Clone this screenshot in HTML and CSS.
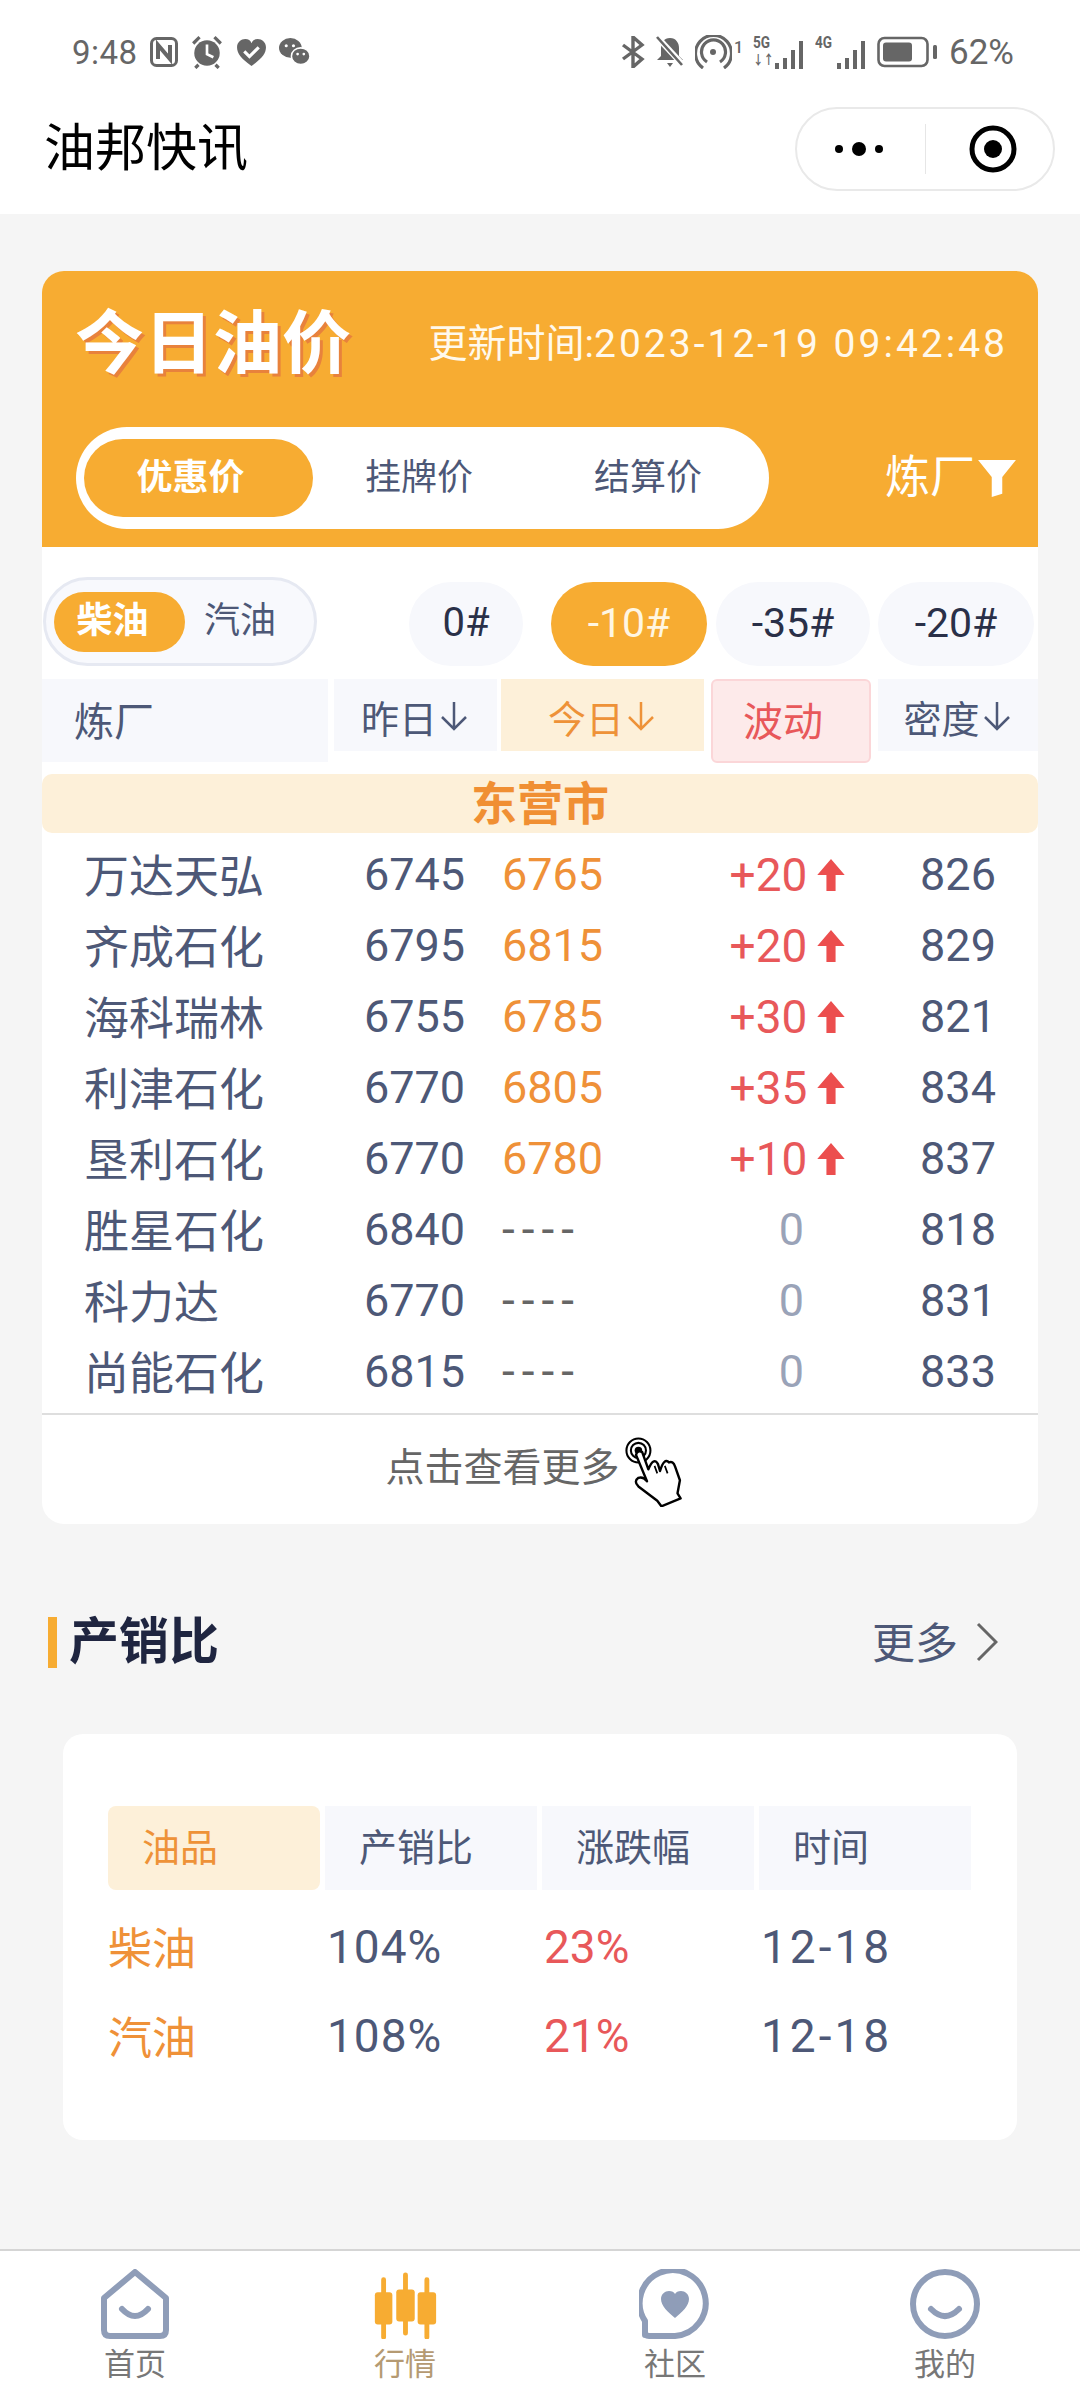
FILE: index.html
```html
<!DOCTYPE html>
<html lang="zh-CN">
<head>
<meta charset="utf-8">
<title>油邦快讯</title>
<link rel="stylesheet" href="styles.css">
</head>
<body>
<div class="app">
  <header class="top">
    <div class="status">
      <div class="status-group">
        <span class="clock">9:48</span>
        <svg class="si" width="28" height="30" viewBox="0 0 28 30"><rect x="1.5" y="1.5" width="25" height="27" rx="5" fill="none" stroke="#666" stroke-width="3"/><path d="M8 22V8l12 14V8" fill="none" stroke="#666" stroke-width="4"/></svg>
        <svg class="si" width="34" height="34" viewBox="0 0 32 32"><circle cx="16" cy="17" r="12" fill="#666"/><path d="M16 9v9l6 3" fill="none" stroke="#fff" stroke-width="2.5"/><path d="M3 8l6-6M29 8l-6-6M8 28l-3 3M24 28l3 3" stroke="#666" stroke-width="3"/></svg>
        <svg class="si" width="31" height="29" viewBox="0 0 30 28"><path d="M15 27C5 20 1 15 1 9c0-5 4-8 8-8 3 0 5 1 6 4 1-3 3-4 6-4 4 0 8 3 8 8 0 6-4 11-14 18z" fill="#666"/><path d="M8 13l5 5 9-9" fill="none" stroke="#fff" stroke-width="3"/></svg>
        <svg class="si" width="31" height="30" viewBox="0 0 30 28"><ellipse cx="11" cy="10" rx="11" ry="9.500" fill="#666"/><ellipse cx="21" cy="18" rx="9" ry="8" fill="#666" stroke="#fff" stroke-width="1.500"/><circle cx="7" cy="8" r="1.500" fill="#fff"/><circle cx="14" cy="8" r="1.500" fill="#fff"/><circle cx="18" cy="16" r="1.300" fill="#fff"/><circle cx="24" cy="16" r="1.300" fill="#fff"/></svg>
      </div>
      <div class="status-group status-right">
        <svg width="24" height="32" viewBox="0 0 24 32"><path d="M2 9l19 14-9 8V1l9 8L2 23" fill="none" stroke="#666" stroke-width="3.400"/></svg>
        <svg width="30" height="32" viewBox="0 0 30 32"><path d="M15 2c-6 0-9 5-9 10v8l-4 4h26l-4-4v-8c0-5-3-10-9-10zM12 27h6l-3 4z" fill="#666"/><path d="M3 2l25 27" stroke="#fff" stroke-width="6"/><path d="M2 1l25 28" stroke="#666" stroke-width="2.600"/></svg>
        <svg width="37" height="34" viewBox="0 0 37 34"><circle cx="18" cy="17" r="3" fill="#666"/><path d="M12 27a12 12 0 1 1 13 0M8 33a18 18 0 1 1 21 0" fill="none" stroke="#666" stroke-width="3.200"/></svg>
        <span class="tiny one">1</span>
        <span class="sim">
          <span class="sim-type">5G<i>↓↑</i></span>
          <svg width="32" height="30" viewBox="0 0 32 30"><path d="M2 23h4v6H2zM10 18h4v11h-4zM18 10h4v19h-4zM26 1h4v28h-4z" fill="#666"/></svg>
        </span>
        <span class="sim sim-four">
          <span class="sim-type">4G</span>
          <svg width="32" height="30" viewBox="0 0 32 30"><path d="M2 23h4v6H2zM10 18h4v11h-4zM18 10h4v19h-4zM26 1h4v28h-4z" fill="#666"/></svg>
        </span>
        <svg width="60" height="32" viewBox="0 0 60 32"><rect x="1.500" y="2" width="49" height="28" rx="6" fill="none" stroke="#666" stroke-width="2.600"/><rect x="6" y="6.500" width="29" height="19" rx="3" fill="#666"/><rect x="56" y="9" width="4" height="14" rx="1.500" fill="#666"/></svg>
        <span class="pct">62%</span>
      </div>
    </div>
    <div class="nav">
      <h1 class="nav-title">油邦快讯</h1>
      <div class="capsule">
        <svg class="cap-more" width="52" height="16" viewBox="0 0 52 16"><circle cx="6" cy="8" r="4" fill="#000"/><circle cx="26" cy="8" r="7" fill="#000"/><circle cx="46" cy="8" r="4" fill="#000"/></svg>
        <span class="cap-line"></span>
        <svg class="cap-target" width="48" height="48" viewBox="0 0 48 48"><circle cx="24" cy="24" r="21" fill="none" stroke="#000" stroke-width="5"/><circle cx="24" cy="24" r="9" fill="#000"/></svg>
      </div>
    </div>
  </header>

  <main class="main">
    <section class="price-card">
      <div class="price-head">
        <div class="head-top">
          <h2 class="head-title">今日油价</h2>
          <span class="head-time">更新时间:<span class="head-nums">2023-12-19 09:42:48</span></span>
        </div>
        <div class="head-tabs">
          <div class="pill">
            <span class="pill-item is-on">优惠价</span>
            <span class="pill-item">挂牌价</span>
            <span class="pill-item">结算价</span>
          </div>
          <div class="refinery-filter">
            <span>炼厂</span>
            <svg width="40" height="38" viewBox="0 0 38 36"><path d="M1 1h36L24 17v16l-10 3V17z" fill="#fff"/></svg>
          </div>
        </div>
      </div>

      <div class="selectors">
        <div class="oil-toggle">
          <span class="oil-item is-on">柴油</span>
          <span class="oil-item">汽油</span>
        </div>
        <div class="grades">
          <span class="grade grade-0">0#</span>
          <span class="grade grade-10 is-on">-10#</span>
          <span class="grade grade-35">-35#</span>
          <span class="grade grade-20">-20#</span>
        </div>
      </div>

      <div class="thead">
        <div class="th th-name">炼厂</div>
        <div class="th th-mid"><span>昨日</span><svg class="arr" width="28" height="30" viewBox="0 0 28 30"><path d="M14 1v27M2 16l12 12 12-12" fill="none" stroke="currentColor" stroke-width="2.500"/></svg></div>
        <div class="th th-mid th-today"><span>今日</span><svg class="arr" width="28" height="30" viewBox="0 0 28 30"><path d="M14 1v27M2 16l12 12 12-12" fill="none" stroke="currentColor" stroke-width="2.500"/></svg></div>
        <div class="th th-wave">波动</div>
        <div class="th th-mid"><span>密度</span><svg class="arr" width="28" height="30" viewBox="0 0 28 30"><path d="M14 1v27M2 16l12 12 12-12" fill="none" stroke="currentColor" stroke-width="2.500"/></svg></div>
      </div>

      <div class="city">东营市</div>

      <div class="rows">
        <div class="row"><span class="c-name">万达天弘</span><span class="c-y">6745</span><span class="c-t">6765</span><span class="c-w up">+20<svg class="up-arrow" width="28" height="32" viewBox="0 0 24 28"><path d="M12 0L24 14h-8v14H8V14H0z" fill="#ec4e4e"/></svg></span><span class="c-d">826</span></div>
        <div class="row"><span class="c-name">齐成石化</span><span class="c-y">6795</span><span class="c-t">6815</span><span class="c-w up">+20<svg class="up-arrow" width="28" height="32" viewBox="0 0 24 28"><path d="M12 0L24 14h-8v14H8V14H0z" fill="#ec4e4e"/></svg></span><span class="c-d">829</span></div>
        <div class="row"><span class="c-name">海科瑞林</span><span class="c-y">6755</span><span class="c-t">6785</span><span class="c-w up">+30<svg class="up-arrow" width="28" height="32" viewBox="0 0 24 28"><path d="M12 0L24 14h-8v14H8V14H0z" fill="#ec4e4e"/></svg></span><span class="c-d">821</span></div>
        <div class="row"><span class="c-name">利津石化</span><span class="c-y">6770</span><span class="c-t">6805</span><span class="c-w up">+35<svg class="up-arrow" width="28" height="32" viewBox="0 0 24 28"><path d="M12 0L24 14h-8v14H8V14H0z" fill="#ec4e4e"/></svg></span><span class="c-d">834</span></div>
        <div class="row"><span class="c-name">垦利石化</span><span class="c-y">6770</span><span class="c-t">6780</span><span class="c-w up">+10<svg class="up-arrow" width="28" height="32" viewBox="0 0 24 28"><path d="M12 0L24 14h-8v14H8V14H0z" fill="#ec4e4e"/></svg></span><span class="c-d">837</span></div>
        <div class="row"><span class="c-name">胜星石化</span><span class="c-y">6840</span><span class="c-t dash">----</span><span class="c-w zero">0</span><span class="c-d">818</span></div>
        <div class="row"><span class="c-name">科力达</span><span class="c-y">6770</span><span class="c-t dash">----</span><span class="c-w zero">0</span><span class="c-d">831</span></div>
        <div class="row"><span class="c-name">尚能石化</span><span class="c-y">6815</span><span class="c-t dash">----</span><span class="c-w zero">0</span><span class="c-d">833</span></div>
      </div>

      <div class="more-row">
        <span class="more-text">点击查看更多</span>
        <svg class="hand" width="60" height="72" viewBox="970 420 175 210"><circle cx="1015" cy="465" r="35" fill="none" stroke="#000" stroke-width="6"/><circle cx="1015" cy="465" r="22" fill="none" stroke="#000" stroke-width="6"/><circle cx="1015" cy="465" r="11" fill="#000"/><path d="M1008 478Q1012 463 1026 470L1044 520Q1060 482 1072 505L1078 525Q1090 485 1104 500Q1116 495 1122 512L1136 552L1129 590L1138 605L1082 628L1070 612L1015 570Q1000 555 1015 545Q1028 540 1040 555Z" fill="#fff" stroke="#000" stroke-width="7" stroke-linejoin="round"/><path d="M1062 510L1070 532M1092 510L1100 532" stroke="#000" stroke-width="5"/></svg>
      </div>
    </section>

    <div class="section-head">
      <div class="section-name"><i class="section-bar"></i><h2>产销比</h2></div>
      <div class="section-more">
        <span>更多</span>
        <svg width="22" height="40" viewBox="0 0 22 40"><path d="M2 2l18 18L2 38" fill="none" stroke="#666" stroke-width="3"/></svg>
      </div>
    </div>

    <section class="ratio-card">
      <div class="ratio-grid ratio-head">
        <div class="rh rh-on">油品</div>
        <div class="rh">产销比</div>
        <div class="rh">涨跌幅</div>
        <div class="rh">时间</div>
      </div>
      <div class="ratio-grid ratio-row">
        <span class="r-oil">柴油</span><span class="r-val">104%</span><span class="r-rise">23%</span><span class="r-val">12-18</span>
      </div>
      <div class="ratio-grid ratio-row">
        <span class="r-oil">汽油</span><span class="r-val">108%</span><span class="r-rise">21%</span><span class="r-val">12-18</span>
      </div>
    </section>
  </main>

  <nav class="tabbar">
    <div class="tab">
      <svg width="68" height="70" viewBox="0 0 68 70"><path d="M34 3L65 29V61Q65 67 59 67H9Q3 67 3 61V29Z" fill="none" stroke="#8f9db8" stroke-width="6" stroke-linejoin="round"/><path d="M21 40Q34 54 47 40" fill="none" stroke="#8f9db8" stroke-width="6" stroke-linecap="round"/></svg>
      <span>首页</span>
    </div>
    <div class="tab tab-on">
      <svg width="68" height="70" viewBox="0 0 68 72"><path d="M12 11v59M34.500 6v60M56.500 11v59" stroke="#f7ac32" stroke-width="5" stroke-linecap="round"/><rect x="3" y="24" width="18" height="33" rx="3" fill="#f7ac32"/><rect x="25" y="21" width="19" height="33" rx="3" fill="#f7ac32"/><rect x="47" y="24" width="19" height="33" rx="3" fill="#f7ac32"/></svg>
      <span>行情</span>
    </div>
    <div class="tab">
      <svg width="72" height="70" viewBox="0 0 72 70"><path d="M6 66V52A33 33 0 1 1 36 67H10Q6 67 6 63Z" fill="none" stroke="#8f9db8" stroke-width="6" stroke-linejoin="round"/><path d="M36 49C29 43 22 37 22 30c0-5 4-8 8-8 3 0 5 1 6 3 1-2 3-3 6-3 4 0 8 3 8 8 0 7-7 13-14 19z" fill="#8f9db8"/></svg>
      <span>社区</span>
    </div>
    <div class="tab">
      <svg width="72" height="70" viewBox="0 0 72 70"><circle cx="36" cy="35" r="32" fill="none" stroke="#8f9db8" stroke-width="6"/><path d="M22 40Q36 54 50 40" fill="none" stroke="#8f9db8" stroke-width="6" stroke-linecap="round"/></svg>
      <span>我的</span>
    </div>
  </nav>
</div>
</body>
</html>
```

FILE: styles.css
```css
* { box-sizing: border-box; }
html, body { margin: 0; padding: 0; }
body {
  width: 1080px;
  height: 2400px;
  overflow: hidden;
  font-family: Roboto, "Noto Sans CJK SC", sans-serif;
  color: #4d5877;
  background: #f5f5f5;
}
h1, h2 { margin: 0; font-weight: normal; }
.app { width: 1080px; height: 2400px; display: flex; flex-direction: column; }

/* top */
.top { background: #fff; height: 214px; flex: none; }
.status {
  height: 86px;
  padding: 18px 66px 0 72px;
  display: flex;
  justify-content: space-between;
  align-items: center;
  color: #666;
}
.status-group { display: flex; align-items: center; gap: 12px; }
.status-right { gap: 10px; }
.clock { font-size: 33px; letter-spacing: 0.5px; }
.pct { font-size: 35px; margin-left: 2px; }
.tiny { font-size: 14px; font-weight: 500; }
.one { align-self: flex-start; margin: 6px 0 0 -8px; font-size: 16px; }
.sim { display: flex; align-items: flex-end; height: 36px; }
.sim-type {
  font-size: 17px;
  font-weight: 700;
  line-height: 17px;
  width: 20px;
  display: flex;
  flex-direction: column;
  align-self: flex-start;
  transform: scaleX(.8);
  transform-origin: left top;
}
.sim-type i { font-style: normal; font-size: 13px; font-weight: 700; white-space: nowrap; }
.nav {
  height: 128px;
  padding: 0 25px 2px 44px;
  display: flex;
  justify-content: space-between;
  align-items: center;
}
.nav-title { font-size: 51px; color: #000; line-height: 60px; }
.capsule {
  width: 260px;
  height: 84px;
  border: 2px solid #e9e9e9;
  border-radius: 42px;
  display: flex;
  align-items: center;
  padding-left: 36px;
}
.cap-line { width: 1px; height: 50px; background: #e6e6e6; margin-left: 40px; }
.cap-target { margin-left: 43px; }

/* main */
.main { flex: 1; padding: 57px 42px 0; }
.price-card {
  background: #fff;
  border-radius: 22px;
  overflow: hidden;
  height: 1253px;
}
.price-head { height: 276px; background: #f7ac32; color: #fff; }
.head-top {
  height: 144px;
  padding: 0 33px 0 33px;
  display: flex;
  justify-content: space-between;
  align-items: center;
}
.head-title { font-size: 69px; font-weight: 700; line-height: 80px; margin-top: 4px; text-shadow: 3px 3px 0 #e8823c; }
.head-time { font-size: 39px; color: #fff9ec; margin-bottom: 6px; white-space: nowrap; }
.head-nums { letter-spacing: 3px; margin-right: -3px; }
.head-tabs {
  margin-top: 12px;
  padding: 0 21px 0 34px;
  display: flex;
  justify-content: space-between;
  align-items: center;
}
.pill {
  width: 693px;
  height: 102px;
  background: #fff;
  border-radius: 51px;
  padding: 12px 8px;
  display: flex;
}
.pill-item {
  width: 229px;
  height: 78px;
  line-height: 78px;
  text-align: center;
  font-size: 36px;
  color: #4d5877;
}
.pill-item.is-on {
  width: 232px;
  padding-right: 16px;
  background: #f7ac32;
  color: #fff;
  font-weight: 700;
  border-radius: 39px;
}
.pill-item.is-on + .pill-item { margin-left: -7px; margin-right: 3px; }
.refinery-filter { display: flex; align-items: center; gap: 2px; font-size: 45px; line-height: 56px; }

/* selectors */
.selectors {
  height: 132px;
  padding: 30px 0 0 1px;
  display: flex;
  align-items: flex-start;
  justify-content: space-between;
}
.oil-toggle {
  width: 274px;
  height: 89px;
  border: 3px solid #e6e9f2;
  background: #f8f9fd;
  border-radius: 45px;
  padding: 12px 8px;
  display: flex;
  gap: 19px;
  font-size: 36px;
}
.oil-item { height: 60px; line-height: 58px; }
.oil-item.is-on {
  width: 131px;
  padding-right: 14px;
  background: #f7ac32;
  border-radius: 30px;
  color: #fff;
  font-weight: 700;
  text-align: center;
}
.grades { display: flex; margin-top: 5px; padding-right: 4px; }
.grade {
  height: 84px;
  line-height: 82px;
  border-radius: 42px;
  background: #f7f8fc;
  text-align: center;
  font-size: 41px;
  color: #2a3048;
}
.grade-0 { width: 114px; margin-right: 28px; font-size: 40px; }
.grade-10 { width: 156px; margin-right: 9px; }
.grade-35 { width: 154px; margin-right: 8px; }
.grade-20 { width: 156px; }
.grade.is-on { background: #f7ac32; color: #fff6e2; }

/* table head */
.thead {
  display: grid;
  grid-template-columns: 286px 163px 203px 160px 160px;
  column-gap: 6px;
  align-items: start;
  height: 95px;
  font-size: 38px;
}
.th { background: #f7f8fc; height: 72px; display: flex; align-items: center; justify-content: center; }
.th-mid { padding: 2px 2px 0 0; }
.arr { margin-left: 3px; flex: none; }
.th-name { height: 83px; justify-content: flex-start; padding: 0 0 4px 32px; font-size: 40px; }
.th-today { background: #fdf0d9; color: #ee9238; margin: 0 2px 0 -2px; }
.th-wave {
  height: 84px;
  padding: 0 16px 4px 0;
  margin: 0 1px 0 -1px;
  font-size: 40px;
  background: #fdeaea;
  border: 2px solid #fbd6d8;
  border-radius: 6px;
  color: #e8585a;
}

.city {
  height: 59px;
  line-height: 60px;
  background: #fdf0d9;
  border-radius: 10px;
  text-align: center;
  font-size: 46px;
  font-weight: 700;
  color: #f08f33;
}

/* rows */
.rows { padding-top: 6px; height: 582px; border-bottom: 2px solid #dedede; }
.row {
  display: grid;
  grid-template-columns: 292px 168px 209px 167px 160px;
  height: 71px;
  align-items: center;
  font-size: 45px;
  color: #4d5877;
}
.c-name { padding: 0 0 3px 42px; }
.c-y { padding-left: 30px; }
.c-t { padding-left: 0; color: #ef9138; }
.c-t.dash { color: #666; letter-spacing: 7px; font-size: 46px; line-height: 60px; padding-bottom: 2px; }
.c-w { display: flex; justify-content: center; align-items: center; gap: 10px; }
.c-w.up { color: #e8585a; padding-right: 14px; font-size: 46px; }
.zero { color: #9aa3b8; padding-right: 6px; }
.c-d { text-align: center; }

.more-row {
  height: 105px;
  display: flex;
  align-items: center;
  justify-content: center;
  gap: 3px;
  padding-right: 12px;
  font-size: 39px;
  color: #666;
}
.more-text { padding-bottom: 8px; }
.hand { margin-top: 6px; }

/* section head */
.section-head {
  margin-top: 86px;
  height: 60px;
  padding: 0 40px 0 6px;
  display: flex;
  justify-content: space-between;
  align-items: center;
}
.section-name { display: flex; align-items: center; gap: 12px; }
.section-bar { width: 9px; height: 51px; background: #f7ac32; display: block; margin-top: 4px; }
.section-name h2 { font-size: 50px; line-height: 60px; padding-top: 4px; font-weight: 700; color: #1f2540; }
.section-more { display: flex; align-items: center; gap: 18px; font-size: 43px; }
.section-more svg { margin-top: 4px; }

/* ratio */
.ratio-card {
  margin: 64px 21px 0;
  height: 406px;
  background: #fff;
  border-radius: 20px;
  padding: 72px 0 0 45px;
}
.ratio-grid {
  display: grid;
  grid-template-columns: repeat(4, 212px);
  column-gap: 5px;
}
.ratio-head { margin-bottom: 12px; }
.rh {
  height: 84px;
  line-height: 84px;
  padding-left: 34px;
  background: #f7f8fc;
  font-size: 38px;
}
.rh-on { background: #fdf0d9; color: #ee9238; border-radius: 8px; }
.ratio-row { height: 89px; align-items: center; font-size: 46px; }
.r-oil { font-size: 44px; color: #ef9138; padding-bottom: 2px; }
.r-val { padding-left: 2px; letter-spacing: 1px; }
.r-val:last-child { letter-spacing: 3px; }
.r-rise { padding-left: 2px; color: #e8585a; }

/* tabbar */
.tabbar {
  flex: none;
  height: 151px;
  background: #fff;
  border-top: 2px solid #d5d5d5;
  padding-top: 18px;
  display: grid;
  grid-template-columns: repeat(4, 270px);
}
.tab {
  display: flex;
  flex-direction: column;
  align-items: center;
  font-size: 31px;
  line-height: 40px;
  color: #777;
}
.tab svg { display: block; margin-bottom: 6px; }
.tab-on { color: #b59a72; }
```
